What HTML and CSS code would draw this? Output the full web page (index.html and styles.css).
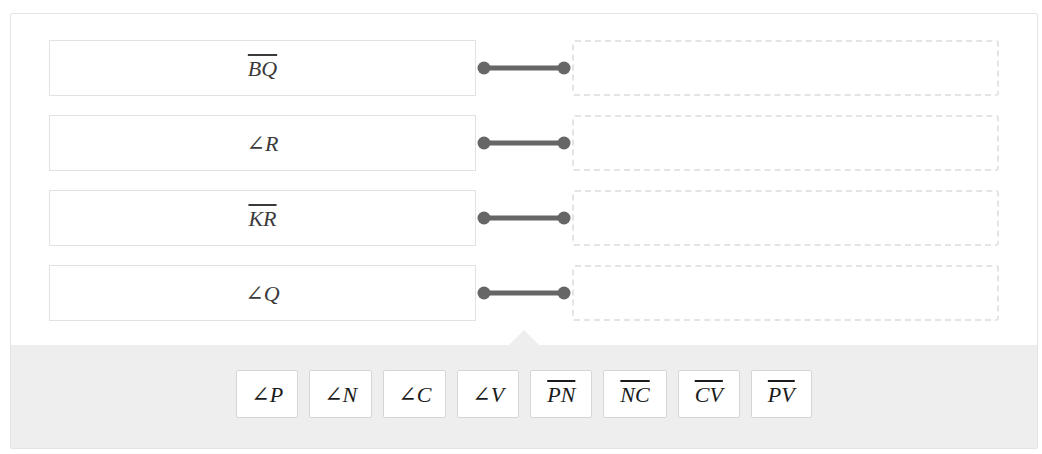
FILE: index.html
```html
<!DOCTYPE html>
<html>
<head>
<meta charset="utf-8">
<link rel="stylesheet" href="styles.css">
</head>
<body>
<div class="widget">
  <div class="rows">
    <div class="row">
      <div class="term"><span class="math"><span class="bar">BQ</span></span></div>
      <svg class="link" width="96" height="56" viewBox="0 0 96 56"><line x1="8" y1="28" x2="88" y2="28"/><circle cx="8" cy="28" r="6.5"/><circle cx="88" cy="28" r="6.5"/></svg>
      <div class="slot"></div>
    </div>
    <div class="row">
      <div class="term"><span class="math">∠R</span></div>
      <svg class="link" width="96" height="56" viewBox="0 0 96 56"><line x1="8" y1="28" x2="88" y2="28"/><circle cx="8" cy="28" r="6.5"/><circle cx="88" cy="28" r="6.5"/></svg>
      <div class="slot"></div>
    </div>
    <div class="row">
      <div class="term"><span class="math"><span class="bar">KR</span></span></div>
      <svg class="link" width="96" height="56" viewBox="0 0 96 56"><line x1="8" y1="28" x2="88" y2="28"/><circle cx="8" cy="28" r="6.5"/><circle cx="88" cy="28" r="6.5"/></svg>
      <div class="slot"></div>
    </div>
    <div class="row">
      <div class="term"><span class="math">∠Q</span></div>
      <svg class="link" width="96" height="56" viewBox="0 0 96 56"><line x1="8" y1="28" x2="88" y2="28"/><circle cx="8" cy="28" r="6.5"/><circle cx="88" cy="28" r="6.5"/></svg>
      <div class="slot"></div>
    </div>
  </div>
  <div class="tray">
    <div class="card"><span class="math">∠P</span></div>
    <div class="card"><span class="math">∠N</span></div>
    <div class="card"><span class="math">∠C</span></div>
    <div class="card"><span class="math">∠V</span></div>
    <div class="card"><span class="math"><span class="bar">PN</span></span></div>
    <div class="card"><span class="math"><span class="bar">NC</span></span></div>
    <div class="card"><span class="math"><span class="bar">CV</span></span></div>
    <div class="card"><span class="math"><span class="bar">PV</span></span></div>
  </div>
</div>
</body>
</html>
```

FILE: styles.css
```css
html, body {
  margin: 0;
  padding: 0;
  background: #fff;
}
body {
  padding: 13px 0 0 10px;
  font-family: "Liberation Serif", "DejaVu Serif", serif;
}
.widget {
  width: 1026px;
  border: 1px solid #e4e4e4;
  border-radius: 2px;
  background: #fff;
}
.rows {
  display: flex;
  flex-direction: column;
  gap: 19px;
  padding: 26px 38px 24px 38px;
}
.row {
  display: flex;
  align-items: center;
  height: 56px;
}
.term {
  box-sizing: border-box;
  width: 427px;
  height: 56px;
  border: 1px solid #e2e2e2;
  display: flex;
  align-items: center;
  justify-content: center;
  color: #3a3a3a;
}
.slot {
  box-sizing: border-box;
  width: 427px;
  height: 56px;
  border: 2px dashed #e4e4e4;
  border-radius: 3px;
}
.link {
  display: block;
  flex: none;
}
.link line {
  stroke: #666;
  stroke-width: 5;
}
.link circle {
  fill: #666;
}
.math {
  font-family: "Liberation Serif", "DejaVu Serif", serif;
  font-style: italic;
  font-size: 22px;
  line-height: 22px;
  display: block;
  padding-top: 2px;
}
.bar {
  text-decoration: overline;
  text-decoration-thickness: 2px;
  padding: 0 1px;
}
.tray {
  position: relative;
  background: #eee;
  height: 103px;
  display: flex;
  justify-content: center;
  align-items: flex-start;
  gap: 11px;
  padding-top: 25px;
  box-sizing: border-box;
}
.tray::before {
  content: "";
  position: absolute;
  left: 50%;
  top: -15px;
  margin-left: -15px;
  border-left: 15px solid transparent;
  border-right: 15px solid transparent;
  border-bottom: 15px solid #eee;
}
.card {
  box-sizing: border-box;
  height: 48px;
  padding: 0 14px;
  background: #fff;
  border: 1px solid #d6d6d6;
  border-radius: 2px;
  display: flex;
  align-items: center;
  justify-content: center;
  color: #1a1a1a;
}
.card .bar {
  padding: 0 2px;
}
```
